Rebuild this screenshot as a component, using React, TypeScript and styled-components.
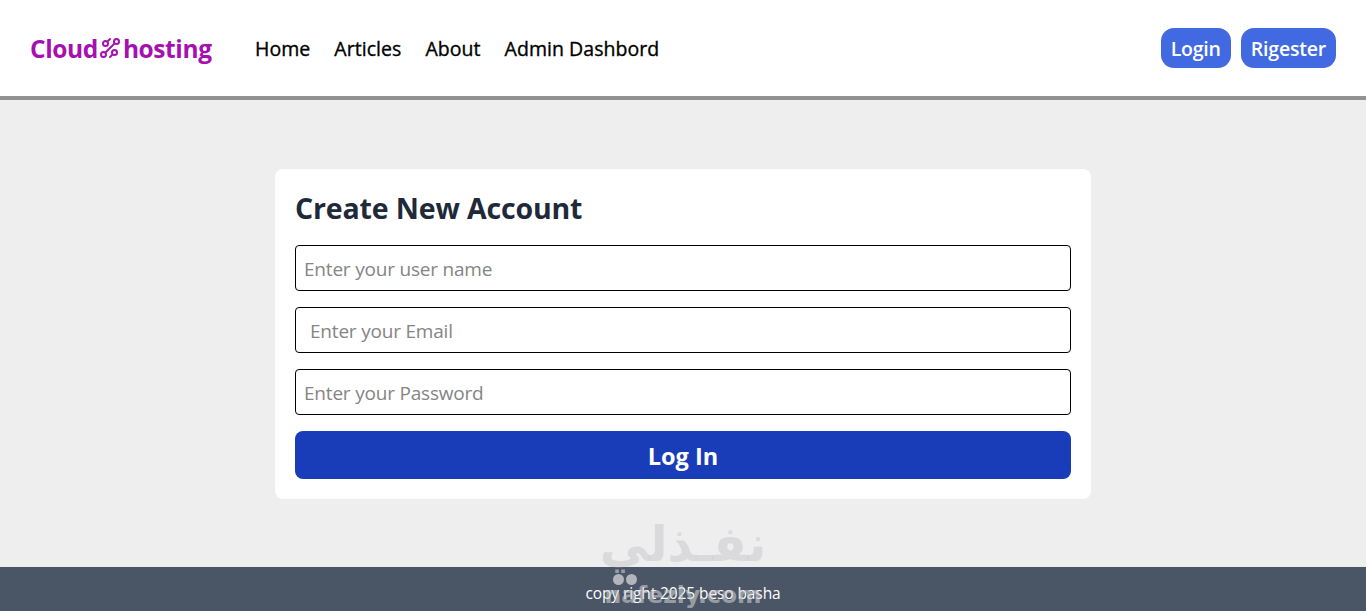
import React from 'react';
import styled, { createGlobalStyle } from 'styled-components';
import { GrTechnology } from 'react-icons/gr';

const GlobalStyle = createGlobalStyle`
    * {
        box-sizing: border-box;
    }

    body {
        margin: 0;
        font-family: "Open Sans", "Noto Sans", sans-serif;
        background: #eeeeee;
    }
`;

const Page = styled.div`
    position: relative;
    display: flex;
    flex-direction: column;
    height: 611px;
    overflow: hidden;
`;

const Header = styled.header`
    display: flex;
    align-items: center;
    height: 100px;
    padding: 0 30px;
    background: #fff;
    border-bottom: 4px solid #919191;
`;

const Logo = styled.div`
    display: flex;
    align-items: center;
    width: 225px;
    font-size: 24.5px;
    font-weight: 700;
    letter-spacing: -0.4px;
    color: #a60fb0;

    svg {
        margin: 0 1px 0 0;
    }
`;

const Nav = styled.nav`
    display: flex;
    gap: 24px;
`;

const NavLink = styled.a`
    font-size: 19.5px;
    font-weight: 400;
    letter-spacing: 0.05px;
    color: #000;
    -webkit-text-stroke: 0.35px #000;
`;

const AuthButtons = styled.div`
    display: flex;
    gap: 10px;
    margin-left: auto;
`;

const AuthButton = styled.button`
    height: 40px;
    padding: 0 10px;
    border: none;
    border-radius: 13px;
    background: #4169e1;
    color: #fff;
    font-family: inherit;
    font-size: 19.5px;
    font-weight: 600;
    letter-spacing: -0.2px;
`;

const Main = styled.main`
    flex: 1;
    display: flex;
    justify-content: center;
    padding-top: 69px;
    background: #eeeeee;
`;

const Card = styled.form`
    display: flex;
    flex-direction: column;
    width: 816px;
    height: 330px;
    padding: 20px;
    background: #fff;
    border-radius: 8px;
`;

const Title = styled.h1`
    margin: 0 0 16px;
    height: 40px;
    font-size: 28.5px;
    line-height: 38px;
    font-weight: 700;
    letter-spacing: -0.15px;
    color: #1e2939;
`;

const Input = styled.input<{ $indent?: number }>`
    height: 46px;
    margin-bottom: 16px;
    padding: 2px 0 0 ${({ $indent }) => $indent ?? 8}px;
    border: 1px solid #000;
    border-radius: 4px;
    background: #fff;
    font-family: inherit;
    font-size: 19px;
    letter-spacing: -0.2px;

    &::placeholder {
        color: #858585;
        opacity: 1;
    }
`;

const SubmitButton = styled.button`
    height: 48px;
    padding-top: 2px;
    border: none;
    border-radius: 8px;
    background: #193cb8;
    color: #fff;
    font-family: inherit;
    font-size: 23.5px;
    font-weight: 700;
`;

const Footer = styled.footer`
    display: flex;
    align-items: center;
    justify-content: center;
    height: 44px;
    padding-top: 8px;
    background: #4a5565;
    color: #fff;
    font-size: 15.5px;
    letter-spacing: -0.1px;
`;

const Watermark = styled.div`
    position: absolute;
    left: 580px;
    top: 516px;
    width: 206px;
    display: flex;
    flex-direction: column;
    align-items: center;
    color: rgba(205, 205, 208, 0.6);
    font-family: "DejaVu Sans", sans-serif;
    font-weight: 700;
    pointer-events: none;
`;

const WatermarkArabic = styled.span`
    font-size: 49px;
    line-height: 58px;
`;

const WatermarkDots = styled.div`
    align-self: flex-start;
    display: flex;
    gap: 2px;
    margin-left: 33px;
`;

const WatermarkDot = styled.span`
    width: 11px;
    height: 11px;
    border-radius: 50%;
    background: rgba(205, 205, 208, 0.8);
`;

const WatermarkLatin = styled.span`
    font-size: 23.5px;
    line-height: 24px;
    margin-top: -2px;
`;

const App = () => {
    return (
        <Page>
            <GlobalStyle />
            <Header>
                <Logo>
                    Cloud
                    <GrTechnology size={24} />
                    hosting
                </Logo>
                <Nav>
                    <NavLink>Home</NavLink>
                    <NavLink>Articles</NavLink>
                    <NavLink>About</NavLink>
                    <NavLink>Admin Dashbord</NavLink>
                </Nav>
                <AuthButtons>
                    <AuthButton>Login</AuthButton>
                    <AuthButton>Rigester</AuthButton>
                </AuthButtons>
            </Header>
            <Main>
                <Card>
                    <Title>Create New Account</Title>
                    <Input placeholder="Enter your user name" />
                    <Input $indent={14} placeholder="Enter your Email" />
                    <Input placeholder="Enter your Password" />
                    <SubmitButton type="button">Log In</SubmitButton>
                </Card>
            </Main>
            <Footer>copy right 2025 beso basha</Footer>
            <Watermark>
                <WatermarkArabic>نفـذلي</WatermarkArabic>
                <WatermarkDots>
                    <WatermarkDot />
                    <WatermarkDot />
                </WatermarkDots>
                <WatermarkLatin>nafezly.com</WatermarkLatin>
            </Watermark>
        </Page>
    );
};

export default App;
